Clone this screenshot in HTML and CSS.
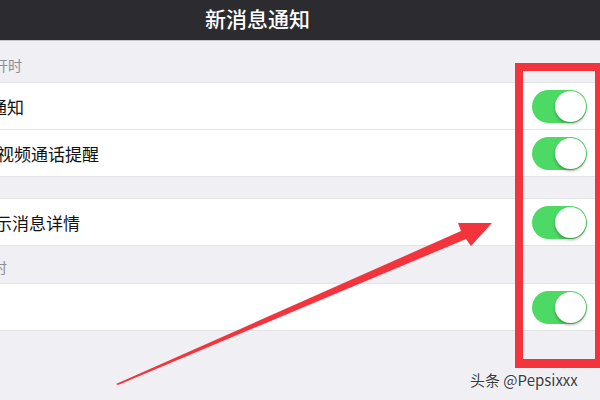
FILE: index.html
```html
<!DOCTYPE html>
<html lang="zh">
<head>
  <meta charset="UTF-8" />
  <meta name="viewport" content="width=device-width, initial-scale=1.0"/>
  <title>新消息通知</title>
  <link rel="stylesheet" href="styles.css">
</head>
<body>
  <div class="navbar">
    <h1 class="title">新消息通知</h1>
  </div>

  <div class="sec-head first"><span class="cut-a">开时</span></div>
  <div class="group">
    <div class="row">
      <span class="label cut-1">通知</span>
      <span class="switch on"></span>
    </div>
    <div class="row">
      <span class="label cut-2">视频通话提醒</span>
      <span class="switch on"></span>
    </div>
  </div>

  <div class="gap"></div>
  <div class="group">
    <div class="row">
      <span class="label cut-3">示消息详情</span>
      <span class="switch on"></span>
    </div>
  </div>

  <div class="sec-head second"><span class="cut-b">时</span></div>
  <div class="group">
    <div class="row">
      <span class="label"></span>
      <span class="switch on"></span>
    </div>
  </div>

  <!-- 标注 -->
  <div class="mark-box"></div>
  <svg class="mark-arrow" width="600" height="400" viewBox="0 0 600 400">
    <polygon points="116,384 461,231 458,223 492,223 471,246 466,239 118,385" fill="#f4343c"/>
  </svg>
  <div class="watermark">头条 @Pepsixxx</div>
</body>
</html>
```

FILE: styles.css
```css
html, body {
  overflow: hidden;
}

body {
  margin: 0;
  width: 600px;
  height: 400px;
  background-color: #efeff4;
  font-family: "Noto Sans CJK SC", "Noto Sans", sans-serif;
  position: relative;
}

.navbar {
  height: 41px;
  background-color: #2c2b30;
  border-bottom: 1px solid #c8c7cc;
  box-sizing: border-box;
  display: flex;
  align-items: center;
  justify-content: center;
  padding-right: 85px;
}

.title {
  margin: 0;
  color: #fff;
  font-size: 21px;
  font-weight: 500;
  line-height: 1;
  margin-top: -4px;
}

.sec-head {
  color: #8e8e93;
  font-size: 14px;
  line-height: 18px;
  box-sizing: border-box;
  overflow: hidden;
  white-space: nowrap;
}

.sec-head.first {
  height: 41px;
  padding-top: 15px;
}

.sec-head.second {
  height: 37px;
  padding-top: 12px;
}

.cut-a { margin-left: -6px; display: inline-block; }
.cut-b { margin-left: -7px; display: inline-block; }

.group {
  background-color: #fff;
  border-top: 1px solid #e3e3e7;
  border-bottom: 1px solid #e3e3e7;
}

.row {
  height: 46px;
  display: flex;
  align-items: center;
  justify-content: space-between;
  padding-right: 13px;
  overflow: hidden;
}

.row + .row {
  border-top: 1px solid #e3e3e7;
}

.label {
  font-size: 17px;
  color: #111;
  white-space: nowrap;
  display: inline-block;
}

.cut-1 { margin-left: -10px; }
.cut-2 { margin-left: -3px; }
.cut-3 { margin-left: -5px; }

.gap {
  height: 21px;
}

.switch {
  width: 55px;
  height: 33px;
  border-radius: 17px;
  background-color: #e5e5ea;
  position: relative;
  flex: none;
}

.switch.on {
  background-color: #4cd964;
}

.switch::after {
  content: "";
  position: absolute;
  top: 1px;
  left: 1px;
  width: 31px;
  height: 31px;
  border-radius: 50%;
  background-color: #fff;
  box-shadow: 0 2px 3px rgba(0, 0, 0, 0.3);
}

.switch.on::after {
  left: 23px;
}

.mark-box {
  position: absolute;
  left: 515px;
  top: 63px;
  width: 85px;
  height: 305px;
  box-sizing: border-box;
  border: solid #f4343c;
  border-width: 8px 5px 9px 8px;
}

.mark-arrow {
  position: absolute;
  left: 0;
  top: 0;
  pointer-events: none;
}

.watermark {
  position: absolute;
  left: 470px;
  top: 369px;
  font-size: 15px;
  color: #3a3a3a;
  white-space: nowrap;
  text-shadow: 0 0 2px #fff, 0 0 1px #fff;
}
```
